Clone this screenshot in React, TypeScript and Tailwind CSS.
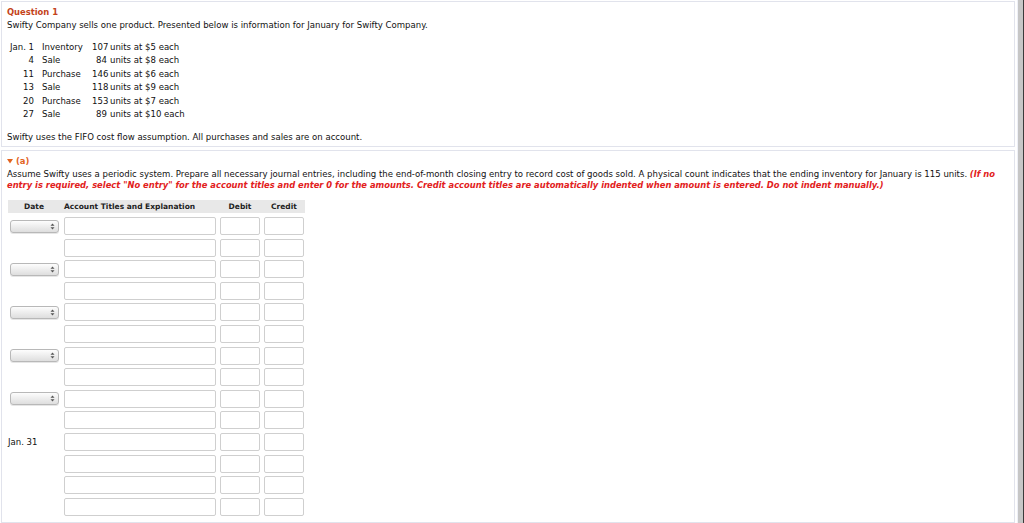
const font = { fontFamily: '"DejaVu Sans", Verdana, sans-serif' };

const inventory = [
  { day: 'Jan. 1', type: 'Inventory', qty: '107', rest: 'units at $5 each' },
  { day: '4', type: 'Sale', qty: '84', rest: 'units at $8 each' },
  { day: '11', type: 'Purchase', qty: '146', rest: 'units at $6 each' },
  { day: '13', type: 'Sale', qty: '118', rest: 'units at $9 each' },
  { day: '20', type: 'Purchase', qty: '153', rest: 'units at $7 each' },
  { day: '27', type: 'Sale', qty: '89', rest: 'units at $10 each' },
];

type RowKind = 'select' | 'blank' | 'date';
const rows: RowKind[] = [
  'select', 'blank', 'select', 'blank', 'select', 'blank', 'select', 'blank', 'select', 'blank',
  'date', 'blank', 'blank', 'blank',
];

function DateSelect() {
  return (
    <div className="ml-[2px] w-[49px] h-[13px] rounded-[3px] border border-[#b8b8b8] bg-gradient-to-b from-[#fdfdfd] to-[#dedede] flex items-center justify-end pr-[3px] shadow-[0_1px_0_#e6e6e6]">
      <svg width="5" height="7" viewBox="0 0 5 7">
        <path d="M0.5 2.8 L2.5 0.6 L4.5 2.8 Z" fill="#555" />
        <path d="M0.5 4.2 L2.5 6.4 L4.5 4.2 Z" fill="#555" />
      </svg>
    </div>
  );
}

function Field({ w }: { w: string }) {
  return <div className={`${w} h-[18px] rounded-[2px] border border-[#cfcfcf] bg-white`} />;
}

export default function App() {
  return (
    <div className="w-[1024px] h-[523px] overflow-hidden bg-white flex text-[#111]" style={font}>
      <div className="flex-1 flex flex-col gap-[3px] pl-[1px] pr-[2px] pt-[1px]">
        <section className="border border-[#e1e3ec] pl-[5px] pt-[4px] h-[146px]">
          <div className="text-[8.4px] leading-[13px] font-bold text-[#c4431a]">Question 1</div>
          <div className="text-[8.55px] leading-[13px]">
            Swifty Company sells one product. Presented below is information for January for Swifty Company.
          </div>
          <div className="mt-[9px] text-[8.55px] leading-[13.4px]">
            {inventory.map((r) => (
              <div key={r.day} className="flex">
                <div className="w-[27px] text-right whitespace-nowrap">{r.day}</div>
                <div className="w-[50px] ml-[8px]">{r.type}</div>
                <div className="w-[15px] text-right">{r.qty}</div>
                <div className="pl-[3px] whitespace-nowrap">{r.rest}</div>
              </div>
            ))}
          </div>
          <div className="mt-[10px] text-[8.55px] leading-[13px]">
            Swifty uses the FIFO cost flow assumption. All purchases and sales are on account.
          </div>
        </section>
        <section className="flex-1 border border-[#e1e3ec] pl-[5px] pt-[4px]">
          <div className="flex items-center gap-[3px] text-[8.4px] leading-[12px] font-bold text-[#e2631f]">
            <svg width="6" height="5" viewBox="0 0 6 5">
              <path d="M0 0 L6 0 L3 4.5 Z" fill="#e2631f" />
            </svg>
            <span>(a)</span>
          </div>
          <div className="mt-[2px] text-[8.55px] leading-[11px] whitespace-nowrap">
            Assume Swifty uses a periodic system. Prepare all necessary journal entries, including the end-of-month closing entry to record cost of goods sold. A physical count indicates that the ending inventory for January is 115 units.{' '}
            <span className="text-[8.35px] font-bold italic text-[#e2211c]">(If no</span>
            <br />
            <span className="text-[8.35px] font-bold italic text-[#e2211c]">
              entry is required, select "No entry" for the account titles and enter 0 for the amounts. Credit account titles are automatically indented when amount is entered. Do not indent manually.)
            </span>
          </div>
          <div className="mt-[9px] w-[298px] pl-[1px]">
            <div className="grid grid-cols-[52px_152px_40px_40px] gap-x-[4px] bg-[#e8e8e8] h-[13px] items-center text-[7.5px] font-bold text-[#222]">
              <div className="text-center">Date</div>
              <div>Account Titles and Explanation</div>
              <div className="text-center">Debit</div>
              <div className="text-center">Credit</div>
            </div>
            <div className="mt-[4px] grid grid-cols-[52px_152px_40px_40px] gap-x-[4px] gap-y-[3.6px]">
              {rows.map((k, i) => (
                <div key={i} className="contents">
                  <div className="flex items-center">
                    {k === 'select' && <DateSelect />}
                    {k === 'date' && <span className="text-[8.55px]">Jan. 31</span>}
                  </div>
                  <Field w="w-[152px]" />
                  <Field w="w-[40px]" />
                  <Field w="w-[40px]" />
                </div>
              ))}
            </div>
          </div>
        </section>
      </div>
      <div className="w-[7px] flex">
        <div className="w-[1px] bg-[#eef0f7]" />
        <div className="w-[5px] bg-[#c6c6c6]" />
        <div className="w-[1px] bg-[#3a3a3a]" />
      </div>
    </div>
  );
}
